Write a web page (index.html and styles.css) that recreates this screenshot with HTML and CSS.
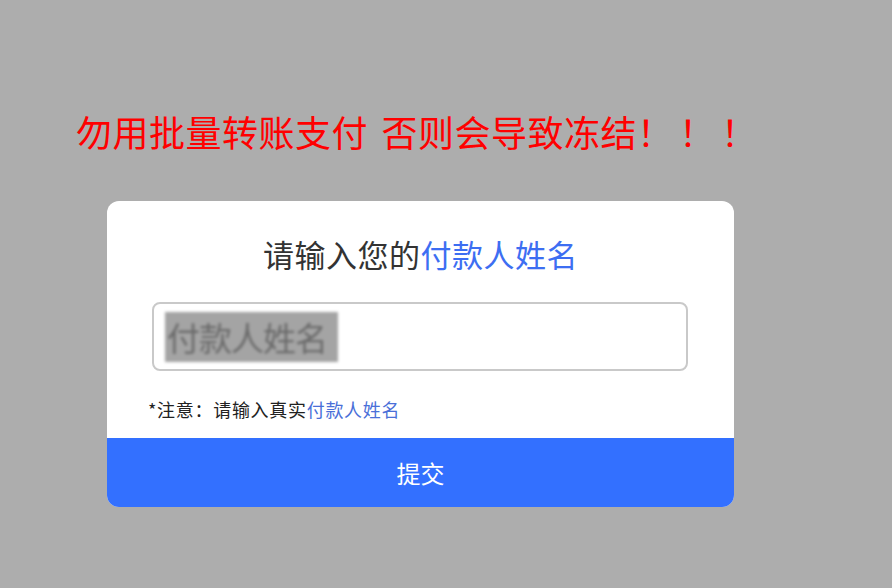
FILE: index.html
```html
<!DOCTYPE html>
<html lang="zh-CN">
<head>
    <meta charset="UTF-8">
    <meta name="viewport" content="width=device-width, initial-scale=1.0">
    <title>付款人姓名</title>
    <link rel="stylesheet" href="styles.css">
</head>
<body>

<!-- Warning -->
<div class="warning">勿用批量转账支付 否则会导致冻结<span class="bang">！！！</span></div>

<div class="card">
    <h2 class="title">请输入您的<span class="blue">付款人姓名</span></h2>

    <!-- Name input (value blurred out) -->
    <div class="input-box">
        <span class="masked">付款人姓名</span>
    </div>

    <p class="note">*注意：请输入真实<span class="blue">付款人姓名</span></p>

    <button class="submit-btn">提交</button>
</div>

</body>
</html>
```

FILE: styles.css
```css
body {
    margin: 0;
    padding: 0;
    background-color: #adadad;
    font-family: "Noto Sans CJK SC", "Microsoft YaHei", sans-serif;
    height: 588px;
}

.warning {
    color: #ff0000;
    font-size: 36px;
    line-height: 40px;
    padding: 111px 0 0 76px;
    letter-spacing: 0.5px;
    word-spacing: 5px;
}

.warning .bang {
    letter-spacing: 6px;
}

.card {
    background-color: #fff;
    width: 627px;
    margin: 50px 0 0 107px;
    border-radius: 12px;
    overflow: hidden;
    padding-top: 35px;
}

.title {
    margin: 0;
    font-size: 31px;
    line-height: 36px;
    font-weight: normal;
    color: #333;
    text-align: center;
    letter-spacing: 0.5px;
}

.blue {
    color: #3d6ef2;
}

.input-box {
    margin: 30px 46px 0 45px;
    height: 65px;
    border: 2px solid #c9c9c9;
    border-radius: 8px;
    display: flex;
    align-items: center;
    padding-left: 11px;
}

.masked {
    background-color: #a4a4a4;
    color: #6a6a6a;
    font-size: 33px;
    line-height: 50px;
    width: 171px;
    padding-left: 2px;
    filter: blur(1.4px);
    letter-spacing: -1px;
}

.note {
    margin: 26px 0 0 41px;
    font-size: 18px;
    line-height: 24px;
    color: #222;
    letter-spacing: 0.7px;
}

.note .blue {
    color: #4a6fd8;
}

.submit-btn {
    display: block;
    width: 100%;
    height: 69px;
    margin-top: 17px;
    border: none;
    background-color: #3370ff;
    color: #fff;
    font-family: inherit;
    font-size: 24px;
    cursor: pointer;
}
```
